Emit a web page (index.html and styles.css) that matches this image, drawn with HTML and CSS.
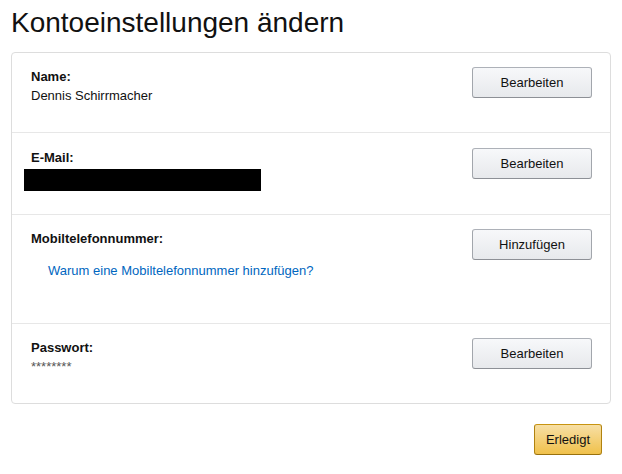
FILE: index.html
```html
<!DOCTYPE html>
<html lang="de">
<head>
    <meta charset="UTF-8">
    <meta name="viewport" content="width=device-width, initial-scale=1.0">
    <title>Kontoeinstellungen ändern</title>
    <link rel="stylesheet" href="styles.css">
</head>
<body>

<div class="page">
    <h1>Kontoeinstellungen ändern</h1>

    <div class="box">
        <div class="row row-name">
            <div class="info">
                <div class="label">Name:</div>
                <div class="value">Dennis Schirrmacher</div>
            </div>
            <button class="btn" type="button">Bearbeiten</button>
        </div>

        <div class="row row-mail">
            <div class="info">
                <div class="label">E-Mail:</div>
                <div class="redacted"></div>
            </div>
            <button class="btn" type="button">Bearbeiten</button>
        </div>

        <div class="row row-phone">
            <div class="info">
                <div class="label">Mobiltelefonnummer:</div>
                <a class="help-link" href="#">Warum eine Mobiltelefonnummer hinzufügen?</a>
            </div>
            <button class="btn" type="button">Hinzufügen</button>
        </div>

        <div class="row row-pass">
            <div class="info">
                <div class="label">Passwort:</div>
                <div class="value stars">********</div>
            </div>
            <button class="btn" type="button">Bearbeiten</button>
        </div>
    </div>

    <div class="actions">
        <button class="btn btn-primary" type="button">Erledigt</button>
    </div>
</div>

</body>
</html>
```

FILE: styles.css
```css
body {
    margin: 0;
    font-family: "Liberation Sans", Arial, sans-serif;
    font-size: 13px;
    line-height: 19px;
    color: #111;
    background: #fff;
}
.page {
    width: 600px;
    padding: 6px 0 0 11px;
}
h1 {
    margin: 0 0 12px;
    font-size: 28px;
    font-weight: normal;
    line-height: 1.2;
}
.box {
    border: 1px solid #ddd;
    border-radius: 4px;
}
.row {
    display: flex;
    justify-content: space-between;
    align-items: flex-start;
    box-sizing: border-box;
    padding: 14px 18px 0 19px;
}
.row + .row {
    border-top: 1px solid #e7e7e7;
}
.row-name {
    height: 79px;
}
.row-mail {
    height: 82px;
    padding-top: 15px;
}
.row-phone {
    height: 109px;
}
.row-pass {
    height: 80px;
}
.label {
    font-weight: bold;
}
.redacted {
    width: 237px;
    height: 22px;
    margin: 2px 0 0 -7px;
    background: #000;
}
.help-link {
    display: block;
    margin: 13px 0 0 17px;
    color: #0066c0;
    text-decoration: none;
}
.stars {
    color: #555;
}
.btn {
    width: 120px;
    height: 31px;
    padding: 0;
    font-family: inherit;
    font-size: 13px;
    color: #111;
    border: 1px solid #adb1b8;
    border-color: #adb1b8 #a2a6ac #8d9096;
    border-radius: 3px;
    background: linear-gradient(to bottom, #f7f8fa, #e7e9ec);
    cursor: pointer;
}
.actions {
    display: flex;
    justify-content: flex-end;
    padding: 20px 9px 0 0;
}
.btn-primary {
    width: 68px;
    border-color: #c89411 #b0820f #99710d;
    background: linear-gradient(to bottom, #f7dfa5, #f0c14b);
}
```
